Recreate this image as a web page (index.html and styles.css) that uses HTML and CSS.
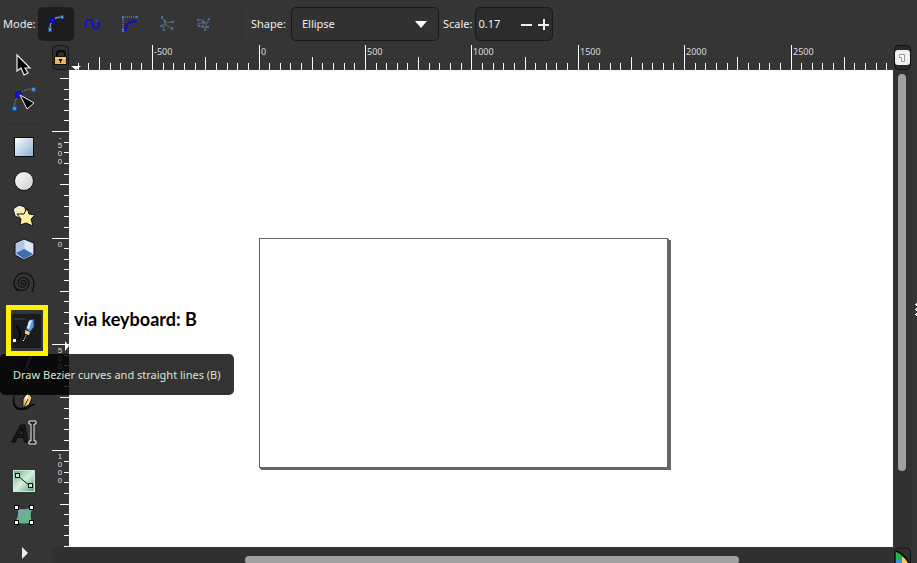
FILE: index.html
```html
<!DOCTYPE html>
<html lang="en">
<head>
<meta charset="utf-8">
<title>Drawing editor</title>
<link rel="stylesheet" href="styles.css">
</head>
<body>
<header class="toolbar">
  <span class="label mode-label">Mode:</span>
  <div class="modes">
    <button class="mode active" type="button" aria-label="Bezier path">
      <svg viewBox="0 0 36 34"><path d="M12 22Q12 10 24 10" fill="none" stroke="#8b8b8b" stroke-width="1.5"/><g fill="#5aa0e8" stroke="#1d4f94"><rect x="10.500" y="20.500" width="3" height="4"/><rect x="22.500" y="8.500" width="3" height="3"/></g><rect x="12.500" y="11.500" width="4" height="4" fill="#1717d8" stroke="#0808a0"/></svg>
    </button>
    <button class="mode" type="button" aria-label="Spiro path">
      <svg viewBox="0 0 36 34"><path d="M12 20C9 17 11 12 15 13C20 14 16 21 20 21C24 21 26 18 22 14" fill="none" stroke="#1111c4" stroke-width="2"/><circle cx="22" cy="14" r="1.300" fill="#3838e0"/></svg>
    </button>
    <button class="mode" type="button" aria-label="BSpline path">
      <svg viewBox="0 0 36 34"><path d="M11 24V10H25" fill="none" stroke="#999" stroke-dasharray="1 1"/><path d="M13 24C14 17 17 14 25 14" fill="none" stroke="#1111c4" stroke-width="2.500"/><path d="M10 9h2v3h-2zM24 9h2v2h-2zM10 22h2v3h-2z" fill="#397cc4"/></svg>
    </button>
    <button class="mode" type="button" aria-label="Straight lines">
      <svg viewBox="0 0 36 34"><path d="M13 10L16 16L12 19M14 23L16 17L22 21M15 16L23 15" fill="none" stroke="#666"/><g fill="#3a6fa8"><path d="M12 9h2v3h-2zM11 18h3v2h-3zM14 22h2v2h-2zM22 20h2v3h-2zM22 14h3v2h-3zM15 13h2v2h-2z"/></g></svg>
    </button>
    <button class="mode" type="button" aria-label="Paraxial lines">
      <svg viewBox="0 0 36 34"><path d="M12 13H17V19H12V16H22V12M20 23V16M15 20H22V21" fill="none" stroke="#666"/><g fill="#3a6fa8"><path d="M11 12h2v2h-2zM16 14h3v2h-3zM12 18h2v2h-2zM22 11h2v2h-2zM21 19h2v2h-2zM18 22h2v2h-2zM16 19h2v2h-2z"/></g></svg>
    </button>
  </div>
  <i class="divider"></i>
  <label class="label" for="shape">Shape:</label>
  <div class="picker">
    <select id="shape"><option>Ellipse</option><option>Triangle in</option></select>
    <svg class="caret" viewBox="0 0 12 7"><path d="M0 0h12L6 7z" fill="#fff"/></svg>
  </div>
  <label class="label" for="scale">Scale:</label>
  <div class="spin">
    <input id="scale" type="text" value="0.17">
    <button type="button" aria-label="Decrease"><svg viewBox="0 0 11 11"><path d="M0 5h11v2H0z" fill="#eee"/></svg></button>
    <button type="button" aria-label="Increase"><svg viewBox="0 0 11 11"><path d="M0 5h11v2H0zM5 0h2v11H5z" fill="#eee"/></svg></button>
  </div>
</header>

<div class="workspace">
  <nav class="toolbox" aria-label="Tools">
    <div class="tools">
      <button class="tool" type="button" aria-label="Select">
        <svg viewBox="0 0 34 34"><path d="M10 7V23L14 20L17 27L21 25L18 20H23z" fill="#000" stroke="#eee" stroke-width="1.200"/></svg>
      </button>
      <button class="tool" type="button" aria-label="Edit nodes">
        <svg viewBox="0 0 34 34"><path d="M26 7Q9 7 7 26" fill="none" stroke="#777" stroke-dasharray="4 1"/><g fill="#4c8fd0" stroke="#1d4f94"><rect x="24.500" y="5.500" width="4" height="4"/><rect x="5.500" y="24.500" width="4" height="4"/></g><rect x="9" y="10" width="5" height="5" fill="#2020a0" stroke="#1010d0" stroke-width="2"/><path d="M13 13L20 27L27 21z" fill="#000" stroke="#eee"/></svg>
      </button>
    </div>
    <div class="tools">
      <button class="tool" type="button" aria-label="Rectangle">
        <svg viewBox="0 0 34 34"><defs><linearGradient id="sq" x2="1" y2="1"><stop stop-color="#fff"/><stop offset="1" stop-color="#88aed2"/></linearGradient></defs><rect x="7.500" y="7.500" width="19" height="19" fill="url(#sq)" stroke="#0a0a0a"/></svg>
      </button>
      <button class="tool" type="button" aria-label="Ellipse">
        <svg viewBox="0 0 34 34"><defs><linearGradient id="ci" x2="1" y2="1"><stop stop-color="#fff"/><stop offset="1" stop-color="#ccc"/></linearGradient></defs><circle cx="17" cy="17" r="9.500" fill="url(#ci)" stroke="#0a0a0a"/></svg>
      </button>
      <button class="tool" type="button" aria-label="Star">
        <svg viewBox="0 0 34 34"><path d="M12 7L18 9L19 16L14 21L8 18L6 11z" fill="#f5edc8" stroke="#111"/><path d="M20 10L22 16L28 17L24 21L26 28L19 25L13 27L14 21L10 16L17 16z" fill="#fff2a0" stroke="#111"/></svg>
      </button>
      <button class="tool" type="button" aria-label="3D box">
        <svg viewBox="0 0 34 34"><path d="M17 7L27 11V23L17 28L8 23V11z" fill="#b9cbea" stroke="#111"/><path d="M17 8L26 12V22L18 17z" fill="#dce6f5"/><path d="M9 12L17 8V17L9 20z" fill="#b4c6e8"/><path d="M9 21L17 17L26 22L17 27z" fill="#426db3"/></svg>
      </button>
      <button class="tool" type="button" aria-label="Spiral">
        <svg viewBox="0 0 34 34"><path d="M17 17A1.500 1.500 0 0 1 14 17A2.500 2.500 0 0 1 19 17A4 4 0 0 1 11 17A5.500 5.500 0 0 1 22 17A7.500 7.500 0 0 1 7 17A10 10 0 0 1 27 17Q27 22 25 26M7 17Q7 22 11 25" fill="none" stroke="#0c0c0c" stroke-width="1.200"/></svg>
      </button>
    </div>
    <div class="tools">
      <div class="hinted">
        <button class="tool active" type="button" aria-label="Bezier" aria-describedby="hint">
          <svg viewBox="0 0 34 34"><path d="M7 5h12" stroke="#444" fill="none"/><path d="M9 26C17 23 12 16 9 11M17 27C16 24 19 19 20 18" fill="none" stroke="#000" stroke-width="1.500"/><path d="M19 15L22 6L27 5L27 13L23 18z" fill="#5a9edc" stroke="#183b68"/><path d="M22 7L25 6L22 15L20 14z" fill="#d8efff"/><path d="M18 16L23 18L22 21L18 20z" fill="#f5d27a"/><path d="M19 21L17 26" stroke="#999"/><rect x="6" y="25" width="3" height="3" fill="#fff"/><rect x="16" y="26" width="1" height="1" fill="#fff"/></svg>
        </button>
        <span class="tooltip" id="hint" role="tooltip">Draw Bezier curves and straight lines (B)</span>
        <span class="highlight"></span>
        <strong class="note">via keyboard: B</strong>
      </div>
      <button class="tool" type="button" aria-label="Pencil">
        <svg viewBox="0 0 34 34"><path d="M23 6L26 9L21 20L16 26L18 17z" fill="#9c7474" stroke="#111"/></svg>
      </button>
      <button class="tool" type="button" aria-label="Calligraphy">
        <svg viewBox="0 0 34 34"><path d="M10 8C5 17 7 26 14 26C19 26 22 21 29 22C23 25 20 29 13 28C4 27 4 16 10 8z" fill="#080808"/><path d="M21 9L25 16L22 23L16 26L16 17z" fill="#f5c77d" stroke="#111"/><path d="M17 25L21 17" stroke="#222"/><path d="M18 16L21 12L20 19z" fill="#fff"/></svg>
      </button>
      <button class="tool" type="button" aria-label="Text">
        <svg viewBox="0 0 34 34"><text class="letter" x="5" y="26">A</text><path d="M22 5h7v3h-2v17h2v3h-7v-3h2V8h-2z" fill="#222" stroke="#eee"/></svg>
      </button>
    </div>
    <div class="tools">
      <button class="tool" type="button" aria-label="Gradient">
        <svg viewBox="0 0 34 34"><defs><linearGradient id="gr" x2="1" y2="1"><stop stop-color="#5cae7b"/><stop offset=".5" stop-color="#d9eee0"/><stop offset="1" stop-color="#48a56d"/></linearGradient></defs><rect x="6.500" y="6.500" width="21" height="21" fill="url(#gr)" stroke="#c8ead4"/><path d="M11 12L23 22" stroke="#111"/><g fill="#ddd" stroke="#111"><rect x="8.500" y="9.500" width="4" height="4"/><rect x="21.500" y="19.500" width="4" height="4"/></g></svg>
      </button>
      <button class="tool" type="button" aria-label="Mesh">
        <svg viewBox="0 0 34 34"><defs><linearGradient id="me" x2="1" y2="1"><stop stop-color="#7e9bcb"/><stop offset=".6" stop-color="#68b58e"/></linearGradient></defs><path d="M10 10Q17 13 26 9Q22 16 25 24Q17 27 8 24Q13 17 10 10z" fill="url(#me)"/><g fill="#fff" stroke="#000"><rect x="7.500" y="7.500" width="4" height="4"/><rect x="22.500" y="7.500" width="4" height="4"/><rect x="7.500" y="22.500" width="4" height="4"/><rect x="22.500" y="22.500" width="4" height="4"/></g></svg>
      </button>
    </div>
    <button class="more" type="button" aria-label="More tools"><svg viewBox="0 0 6 12"><path d="M0 0L6 6L0 12z" fill="#eee"/></svg></button>
  </nav>

  <button class="lock" type="button" aria-label="Lock guides">
    <svg viewBox="0 0 17 25"><rect x="0.500" y="0.500" width="16" height="24" rx="4" fill="#303030" stroke="#181818"/><path d="M5 12V9Q5 6 9 6Q13 6 13 9V12" fill="none" stroke="#080808" stroke-width="2"/><rect x="2.500" y="11.500" width="12" height="8" fill="#eeb458" stroke="#181008"/><path d="M3 13h11" stroke="#ffd98a"/><path d="M7 14h3v2H9v2H8v-2H7z" fill="#111"/></svg>
  </button>
  <svg class="ruler-x" id="ruler-x"></svg>
  <button class="corner" type="button" aria-label="Zoom page">
    <svg viewBox="0 0 19 25"><rect x="1.500" y="0.500" width="16" height="24" rx="4" fill="#292929" stroke="#111"/><rect x="2" y="5" width="15" height="15" rx="3" fill="#f0f0f0"/><path d="M6.500 9.500h5v7h-3v-4h-2z" fill="#fff" stroke="#999"/></svg>
  </button>
  <svg class="ruler-y" id="ruler-y"></svg>
  <main class="canvas"><div class="page"></div></main>
  <div class="scroll-y"><i class="thumb"></i></div>
  <div class="scroll-x"><i class="thumb"></i></div>
  <button class="color" type="button" aria-label="Color management">
    <svg viewBox="0 0 19 16"><path d="M1.500 16V5Q1.500 1 5 1H14Q17.500 1 17.500 5V16" fill="#303030" stroke="#111"/><path d="M3 4Q11 7 16 16H3z" fill="#20b844"/><path d="M3 13L7 11L9 16H3z" fill="#3d8fe0"/><path d="M9 10L12 11L15 16H9z" fill="#f2c766"/><path d="M3 4Q11 7 16 16" fill="none" stroke="#000" stroke-width="1.500"/></svg>
  </button>
  <aside class="dock"><svg viewBox="0 0 2 14"><path d="M1 0h1v3H1zM0 1h2v1H0zM1 5h1v3H1zM0 6h2v1H0zM1 10h1v3H1zM0 11h2v1H0z" fill="#eee"/></svg></aside>
</div>
<script src="rulers.js"></script>
</body>
</html>
```
FILE: styles.css
```css
* { box-sizing: border-box; }
body {
  margin: 0;
  height: 100vh;
  display: flex;
  flex-direction: column;
  overflow: hidden;
  background: #353535;
  color: #eeeeec;
  font: 11px/16px "Noto Sans", "Open Sans", sans-serif;
}
button, input, select { font: inherit; color: inherit; }
button { padding: 0; border: 0; background: none; display: block; }
svg { display: block; }

.toolbar { display: flex; align-items: center; padding: 7px 3px 4px; flex: none; }
.label { flex: none; }
.mode-label { min-width: 35px; }
.modes { display: flex; gap: 1px; }
.mode { width: 36px; height: 34px; border-radius: 5px; }
.mode.active { background: #1d1d1f; }
.divider { width: 1px; height: 32px; margin: 0 9px 0 19px; background: #303030; }
.picker { position: relative; width: 148px; margin: 0 4px 0 5px; }
.picker select {
  display: block;
  width: 100%;
  height: 34px;
  padding: 0 10px;
  appearance: none;
  border: 1px solid #1a1a1a;
  border-radius: 5px;
  background: #323232;
}
.caret { position: absolute; right: 12px; top: 14px; width: 12px; height: 7px; pointer-events: none; }
.spin {
  display: flex;
  align-items: center;
  width: 78px;
  height: 34px;
  margin-left: 3px;
  padding: 0 3px 0 2px;
  gap: 6px;
  border: 1px solid #1a1a1a;
  border-radius: 5px;
  background: #2c2c2c;
}
.spin input { flex: 1; min-width: 0; padding: 0; border: 0; background: none; }
.spin svg { width: 11px; height: 11px; }

.workspace {
  flex: 1;
  min-height: 0;
  display: grid;
  grid-template-columns: 52px 17px minmax(0, 1fr) 19px 5px;
  grid-template-rows: 25px minmax(0, 1fr) 16px;
}
.toolbox { grid-row: 1 / 4; display: flex; flex-direction: column; padding: 3px 7px 0; }
.tools + .tools { padding-top: 14px; background: linear-gradient(#303030, #303030) 0 7px / 100% 1px no-repeat; }
.tool { width: 34px; height: 34px; }
.tool.active { background: #1b1b1d; }
.letter { font: italic bold 24px "Liberation Sans", sans-serif; fill: #1c1c1c; stroke: #080808; }
.more { width: 36px; height: 22px; margin-top: 10px; display: grid; place-items: center; flex: none; }
.more svg { width: 6px; height: 12px; }

.hinted { position: relative; z-index: 2; }
.tooltip {
  position: absolute;
  left: -7px;
  top: 40px;
  padding: 13px 13px 12px;
  border-radius: 5px;
  background: rgba(0, 0, 0, 0.8);
  color: #dde3d0;
  white-space: nowrap;
}
.highlight { position: absolute; left: -1px; top: -9px; width: 42px; height: 51px; border: 5px solid #fff200; }
.note {
  position: absolute;
  left: 67px;
  top: -7px;
  color: #000;
  font: bold 18px/24px Lato, sans-serif;
  white-space: nowrap;
}

.lock svg { width: 17px; height: 25px; }
.ruler-x { width: 100%; height: 25px; }
.ruler-y { grid-column: 2; width: 17px; height: 100%; }
.ruler-x path, .ruler-y path { fill: #fff; }
.ruler-x text, .ruler-y text { font-size: 9px; fill: #ddd; }
.ruler-y text { font-family: "Liberation Sans", sans-serif; font-size: 8px; }
.corner svg { width: 19px; height: 25px; }
.canvas { grid-column: 3; position: relative; overflow: hidden; background: #fff; }
.page {
  position: absolute;
  left: 190px;
  top: 168px;
  width: 409px;
  height: 230px;
  border: 1px solid #666;
  box-shadow: 1px 1px #666, 2px 2px #666, 3px 2px #666;
}
.scroll-y { background: #313131; padding: 4px 6px 0 5px; }
.scroll-y .thumb { display: block; height: 84%; border-radius: 4px; background: #a0a0a0; }
.scroll-x { grid-column: 2 / 4; padding: 9px 154px 0 193px; overflow: hidden; background: #303030; }
.scroll-x .thumb { display: block; height: 8px; border-radius: 4px; background: #a0a0a0; }
.color svg { width: 19px; height: 16px; }
.dock { grid-column: 5; grid-row: 1 / 4; display: flex; align-items: center; justify-content: flex-end; padding-top: 12px; background: #353535; }
.dock svg { width: 2px; height: 14px; }
```
FILE: rulers.js
```js
// Fifty document units between ticks; labels every ten ticks.
const STEP = 10.64;

function drawRuler(id, origin, vertical) {
  const svg = document.getElementById(id);
  const box = svg.getBoundingClientRect();
  const length = vertical ? box.height : box.width;
  let ticks = "";
  let labels = "";
  for (let i = -Math.floor(origin / STEP); origin + i * STEP < length; i++) {
    const at = Math.floor(origin + i * STEP);
    const major = i % 10 === 0;
    const middle = i % 5 === 0;
    if (vertical) {
      const size = major ? 17 : middle ? 9 : 5;
      ticks += `M${17 - size} ${at}h${size}v1h-${size}z`;
    } else {
      const size = major ? 25 : middle ? 13 : 7;
      ticks += `M${at} ${25 - size}h1v${size}h-1z`;
    }
    if (major && vertical) {
      String(i * 50).split("").forEach((ch, n) => {
        labels += `<text x="8" y="${at + 9 + n * 8}" text-anchor="middle">${ch}</text>`;
      });
    } else if (major) {
      labels += `<text x="${at + 2}" y="10">${i * 50}</text>`;
    }
  }
  const marker = vertical ? "M13 271L17 276L13 281z" : "M2 21H12L7 25z";
  svg.innerHTML = `<path d="${ticks}${marker}"/>${labels}`;
}

function drawRulers() {
  drawRuler("ruler-x", 190, false);
  drawRuler("ruler-y", 168, true);
}

drawRulers();
window.addEventListener("resize", drawRulers);
```
